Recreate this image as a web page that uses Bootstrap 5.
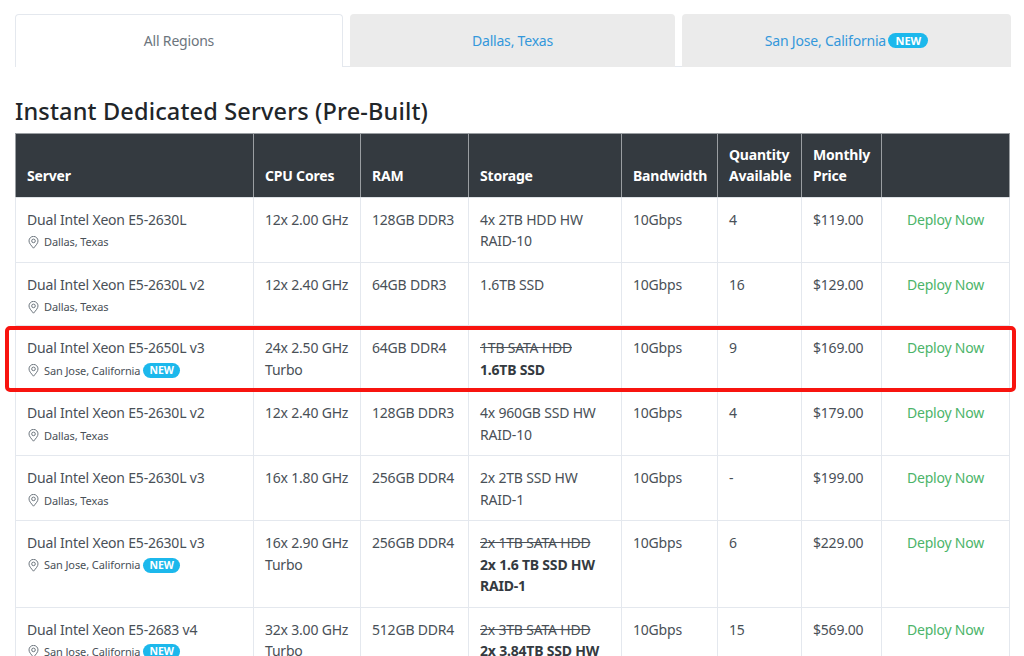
<!DOCTYPE html>
<html lang="en"><head><meta charset="utf-8"><title>Servers</title>
<link href="https://cdn.jsdelivr.net/npm/bootstrap@5.3.0/dist/css/bootstrap.min.css" rel="stylesheet">
<style>
html,body{height:656px;overflow:hidden;background:#fff}
body{font-family:"Noto Sans","Open Sans",sans-serif;font-size:14px;color:#495057;position:relative;letter-spacing:-.2px}
.page-wrap{padding:14px 15px 0 15px;width:1011px}
.region-tabs{border-bottom:1px solid #e4e8ee;gap:7px;height:53px;flex-wrap:nowrap;width:994px}
.region-tabs .nav-item{flex:0 0 auto}
.region-tabs .t1{width:328px}.region-tabs .t2{width:325px}.region-tabs .t3{width:329px;margin-right:-2px}
.region-tabs .nav-link{height:53px;line-height:24px;padding:15px 10px;font-size:14px;text-align:center;color:#3498db;background:#ebebeb;border:0;border-radius:4px 4px 0 0;margin:0}
.region-tabs .nav-link.active{background:#fff;color:#6c757d;border:1px solid #e4e8ee;border-bottom:0;padding:14px 10px;position:relative}
.new-pill{display:inline-block;background:#1cb8ec;color:#fff;font-weight:700;font-size:10.5px;line-height:15px;border-radius:8px;padding:0 6px;vertical-align:1px;letter-spacing:0}
.region-tabs .new-pill{font-size:11px;padding:0 7px;margin-left:-1px}
.page-title{font-size:23.5px;font-weight:500;color:#212529;margin:28px 0 6px;line-height:32px;letter-spacing:.15px}
.server-table{table-layout:fixed;width:994px;margin:0;border-color:#e4e8ee;color:#495057;--bs-table-color:#495057;border-collapse:collapse}
.server-table th{background:#343a40;color:#fff;font-size:14px;font-weight:700;padding:10px 6px 11px 11px;line-height:21px;vertical-align:bottom;border:1px solid #9a9ea2;border-bottom:1px solid #dee2e6}
.server-table td{padding:11px 6px 10.35px 11px;line-height:21.3px;border:1px solid #e4e8ee;font-size:14px;vertical-align:top}
.c1{width:238px}.c2{width:107px}.c3{width:108px}.c4{width:153px}.c5{width:96px}.c6{width:84px}.c7{width:80px}.c8{width:128px}
.loc{font-size:11px;line-height:16px;margin-top:3.9px;display:flex;align-items:center;gap:5px;color:#495057;letter-spacing:-.1px}
.loc svg{flex:none;margin-left:1px}
.loc .new-pill{margin-left:-2px}
.deploy{color:#4cb46a;text-decoration:none;display:block;text-align:center;margin-right:5px}
.old{text-decoration:line-through;color:#495057}
.strong-new{font-weight:700;color:#343a40;display:block}
.server-table td.storage-col{padding-right:18px}
.highlight-box{position:absolute;left:5px;top:326px;width:1011px;height:66px;border:4px solid #f8140f;border-radius:5px;pointer-events:none}
</style></head><body>
<div class="page-wrap">
<ul class="nav region-tabs">
<li class="nav-item t1"><a class="nav-link active" href="#">All Regions</a></li>
<li class="nav-item t2"><a class="nav-link" href="#">Dallas, Texas</a></li>
<li class="nav-item t3"><a class="nav-link" href="#">San Jose, California <span class="new-pill">NEW</span></a></li>
</ul>
<h2 class="page-title">Instant Dedicated Servers (Pre-Built)</h2>
<table class="table server-table">
<colgroup><col class="c1"><col class="c2"><col class="c3"><col class="c4"><col class="c5"><col class="c6"><col class="c7"><col class="c8"></colgroup>
<thead><tr><th>Server</th><th>CPU Cores</th><th>RAM</th><th>Storage</th><th>Bandwidth</th><th>Quantity Available</th><th>Monthly Price</th><th></th></tr></thead>
<tbody>
<tr><td>Dual Intel Xeon E5-2630L<div class="loc"><svg width="11" height="13" viewBox="0 0 11 13" fill="none" stroke="#6c757d"><path d="M5.5 12.2C3 9.2 1 7.2 1 4.9a4.5 4.5 0 0 1 9 0c0 2.3-2 4.3-4.5 7.3z"/><circle cx="5.5" cy="4.9" r="1.8"/></svg>Dallas, Texas</div></td><td>12x 2.00 GHz</td><td>128GB DDR3</td><td class="storage-col">4x 2TB HDD HW RAID-10</td><td>10Gbps</td><td>4</td><td>$119.00</td><td><a class="deploy" href="#">Deploy Now</a></td></tr>
<tr><td>Dual Intel Xeon E5-2630L v2<div class="loc"><svg width="11" height="13" viewBox="0 0 11 13" fill="none" stroke="#6c757d"><path d="M5.5 12.2C3 9.2 1 7.2 1 4.9a4.5 4.5 0 0 1 9 0c0 2.3-2 4.3-4.5 7.3z"/><circle cx="5.5" cy="4.9" r="1.8"/></svg>Dallas, Texas</div></td><td>12x 2.40 GHz</td><td>64GB DDR3</td><td class="storage-col">1.6TB SSD</td><td>10Gbps</td><td>16</td><td>$129.00</td><td><a class="deploy" href="#">Deploy Now</a></td></tr>
<tr><td>Dual Intel Xeon E5-2650L v3<div class="loc"><svg width="11" height="13" viewBox="0 0 11 13" fill="none" stroke="#6c757d"><path d="M5.5 12.2C3 9.2 1 7.2 1 4.9a4.5 4.5 0 0 1 9 0c0 2.3-2 4.3-4.5 7.3z"/><circle cx="5.5" cy="4.9" r="1.8"/></svg>San Jose, California <span class="new-pill">NEW</span></div></td><td>24x 2.50 GHz Turbo</td><td>64GB DDR4</td><td class="storage-col"><span class="old">1TB SATA HDD</span><span class="strong-new">1.6TB SSD</span></td><td>10Gbps</td><td>9</td><td>$169.00</td><td><a class="deploy" href="#">Deploy Now</a></td></tr>
<tr><td>Dual Intel Xeon E5-2630L v2<div class="loc"><svg width="11" height="13" viewBox="0 0 11 13" fill="none" stroke="#6c757d"><path d="M5.5 12.2C3 9.2 1 7.2 1 4.9a4.5 4.5 0 0 1 9 0c0 2.3-2 4.3-4.5 7.3z"/><circle cx="5.5" cy="4.9" r="1.8"/></svg>Dallas, Texas</div></td><td>12x 2.40 GHz</td><td>128GB DDR3</td><td class="storage-col">4x 960GB SSD HW RAID-10</td><td>10Gbps</td><td>4</td><td>$179.00</td><td><a class="deploy" href="#">Deploy Now</a></td></tr>
<tr><td>Dual Intel Xeon E5-2630L v3<div class="loc"><svg width="11" height="13" viewBox="0 0 11 13" fill="none" stroke="#6c757d"><path d="M5.5 12.2C3 9.2 1 7.2 1 4.9a4.5 4.5 0 0 1 9 0c0 2.3-2 4.3-4.5 7.3z"/><circle cx="5.5" cy="4.9" r="1.8"/></svg>Dallas, Texas</div></td><td>16x 1.80 GHz</td><td>256GB DDR4</td><td class="storage-col">2x 2TB SSD HW RAID-1</td><td>10Gbps</td><td>-</td><td>$199.00</td><td><a class="deploy" href="#">Deploy Now</a></td></tr>
<tr><td>Dual Intel Xeon E5-2630L v3<div class="loc"><svg width="11" height="13" viewBox="0 0 11 13" fill="none" stroke="#6c757d"><path d="M5.5 12.2C3 9.2 1 7.2 1 4.9a4.5 4.5 0 0 1 9 0c0 2.3-2 4.3-4.5 7.3z"/><circle cx="5.5" cy="4.9" r="1.8"/></svg>San Jose, California <span class="new-pill">NEW</span></div></td><td>16x 2.90 GHz Turbo</td><td>256GB DDR4</td><td class="storage-col"><span class="old">2x 1TB SATA HDD</span><span class="strong-new">2x 1.6 TB SSD HW RAID-1</span></td><td>10Gbps</td><td>6</td><td>$229.00</td><td><a class="deploy" href="#">Deploy Now</a></td></tr>
<tr><td>Dual Intel Xeon E5-2683 v4<div class="loc"><svg width="11" height="13" viewBox="0 0 11 13" fill="none" stroke="#6c757d"><path d="M5.5 12.2C3 9.2 1 7.2 1 4.9a4.5 4.5 0 0 1 9 0c0 2.3-2 4.3-4.5 7.3z"/><circle cx="5.5" cy="4.9" r="1.8"/></svg>San Jose, California <span class="new-pill">NEW</span></div></td><td>32x 3.00 GHz Turbo</td><td>512GB DDR4</td><td class="storage-col"><span class="old">2x 3TB SATA HDD</span><span class="strong-new">2x 3.84TB SSD HW RAID-1</span></td><td>10Gbps</td><td>15</td><td>$569.00</td><td><a class="deploy" href="#">Deploy Now</a></td></tr>
</tbody></table>
</div>
<div class="highlight-box"></div>
<script src="https://cdn.jsdelivr.net/npm/bootstrap@5.3.0/dist/js/bootstrap.bundle.min.js"></script>
</body></html>
